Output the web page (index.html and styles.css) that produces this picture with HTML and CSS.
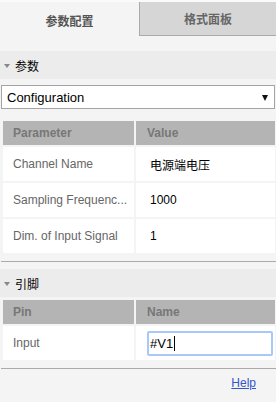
FILE: index.html
```html
<!DOCTYPE html>
<html>
<head>
<meta charset="utf-8">
<link rel="stylesheet" href="styles.css">
</head>
<body>
<div class="tabs">
  <div class="tab active">参数配置</div>
  <div class="tab">格式面板</div>
</div>
<div class="section-header"><span class="tri"></span><span>参数</span></div>
<div class="select"><span>Configuration</span><span class="sel-arrow"></span></div>
<div class="grid">
  <div class="th">Parameter</div><div class="th val">Value</div>
  <div class="td">Channel Name</div><div class="td val dark">电源端电压</div>
  <div class="td">Sampling Frequenc...</div><div class="td val dark">1000</div>
  <div class="td">Dim. of Input Signal</div><div class="td val dark">1</div>
</div>
<div class="rule"></div>
<div class="section-header second"><span class="tri"></span><span>引脚</span></div>
<div class="grid pins">
  <div class="th">Pin</div><div class="th val">Name</div>
  <div class="td">Input</div><div class="td input-cell"><div class="input">#V1<span class="caret"></span></div></div>
</div>
<div class="rule second"></div>
<div class="footer"><a class="help" href="#">Help</a></div>
</body>
</html>
```
FILE: styles.css
```css
html, body {
  margin: 0;
  padding: 0;
}
body {
  background: #f4f4f4;
  font-family: "Liberation Sans", "Noto Sans CJK SC", sans-serif;
  font-size: 12px;
  color: #000;
  width: 276px;
  height: 402px;
  overflow: hidden;
}
.tabs {
  display: flex;
  border-top: 2px solid #fafafa;
  height: 34px;
}
.tab {
  display: flex;
  align-items: center;
  justify-content: center;
  font-weight: bold;
  font-size: 12px;
  color: #555;
}
.tab.active {
  width: 139px;
  background: #f4f4f4;
  padding-top: 2px;
  box-sizing: border-box;
}
.tab:not(.active) {
  flex: 1;
  background: #d6d6d6;
  border-left: 1px solid #aaaaaa;
  border-bottom: 1px solid #aaaaaa;
  color: #666;
}
.section-header {
  margin-top: 15px;
  height: 28px;
  background: #ececec;
  display: flex;
  align-items: center;
  gap: 5px;
  padding-left: 4px;
  font-size: 12px;
}
.section-header.second {
  margin-top: 7px;
}
.tri {
  width: 0;
  height: 0;
  border-left: 3.5px solid transparent;
  border-right: 3.5px solid transparent;
  border-top: 4px solid #888;
  margin-top: 1px;
}
.select {
  margin: 6px 1px 0 1px;
  height: 24px;
  box-sizing: border-box;
  background: #fff;
  border: 1px solid #a4a4a4;
  display: flex;
  align-items: center;
  justify-content: space-between;
  padding: 0 6px 0 5px;
  font-size: 13px;
}
.sel-arrow {
  width: 0;
  height: 0;
  border-left: 3.5px solid transparent;
  border-right: 3.5px solid transparent;
  border-top: 6px solid #111;
  margin-top: 1px;
}
.grid {
  display: grid;
  grid-template-columns: 131px 1fr;
  grid-template-rows: 24px;
  grid-auto-rows: 34px;
  gap: 2px;
  margin: 12px 1px 0 3px;
}
.grid.pins {
  margin-top: 3px;
}
.grid .th {
  height: 24px;
  background: #b4b4b4;
  color: #777;
  font-weight: bold;
  display: flex;
  align-items: center;
  padding-left: 10px;
}
.grid .th.val {
  padding-left: 11px;
}
.td {
  background: #fff;
  color: #666;
  display: flex;
  align-items: center;
  padding-left: 10px;
  white-space: nowrap;
}
.td.val {
  padding-left: 14px;
}
.td.dark {
  color: #000;
}
.td.input-cell {
  padding: 0 2px 0 11px;
}
.input {
  flex: 1;
  height: 25px;
  box-sizing: border-box;
  border: 2px solid #a9c7f7;
  border-radius: 2px;
  background: #fff;
  display: flex;
  align-items: center;
  padding-left: 1px;
  font-size: 13px;
  color: #000;
}
.caret {
  display: inline-block;
  width: 1px;
  height: 15px;
  background: #000;
  margin-left: 1px;
}
.rule {
  margin: 8px 0 0 1px;
  height: 1px;
  background: #aaaaaa;
}
.rule.second {
  margin-top: 8px;
}
.footer {
  display: flex;
  justify-content: flex-end;
  padding: 7px 20px 0 0;
}
.help {
  color: #3355cc;
  text-decoration: underline;
  font-size: 12px;
}
```
